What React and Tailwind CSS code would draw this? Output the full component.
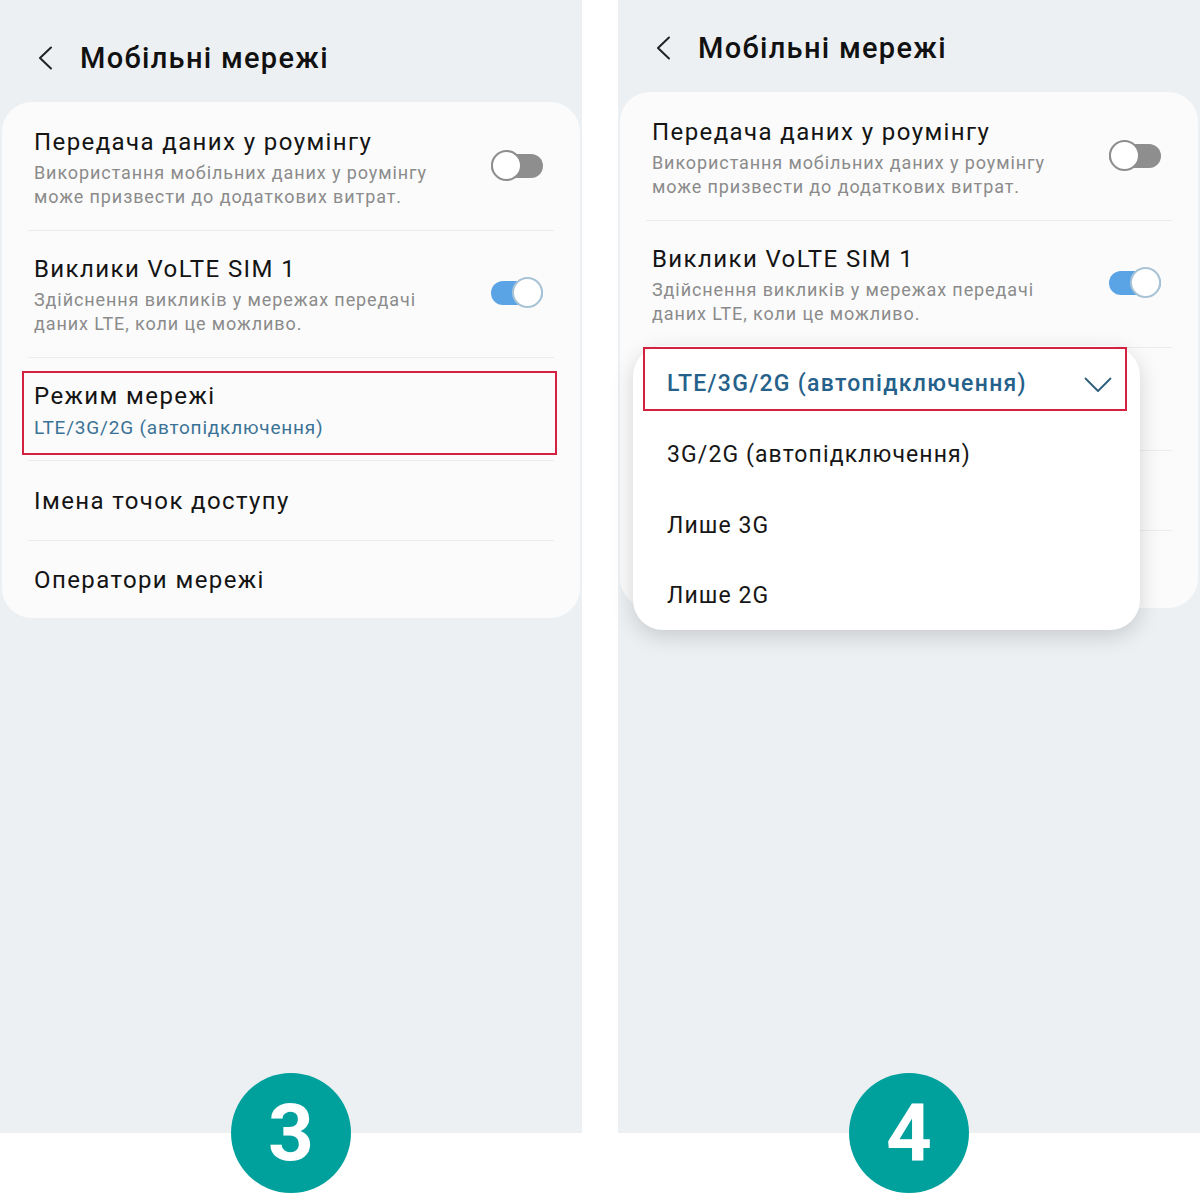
import React from 'react';

const font = { fontFamily: 'Roboto, "Noto Sans", sans-serif' };

const Toggle = ({ on }) => (
    <div className="relative w-[52px] h-[31px] shrink-0 mb-[6px]">
        <div className={`absolute left-0 right-0 top-[4px] h-[24px] rounded-full ${on ? 'bg-[#5aa4e6]' : 'bg-[#8e8e8e]'}`} />
        <div
            className={`absolute top-0 w-[31px] h-[31px] rounded-full bg-white border-2 ${on ? 'right-0 border-[#a9c3d6]' : 'left-0 border-[#8e8e8e]'}`}
        />
    </div>
);

const Divider = () => <div className="h-px bg-[#ececec]" />;

const Row = ({ title, sub, blue, toggle, hidden, className }) => (
    <div className={`flex items-center pl-[6px] pr-[11px] ${className}`}>
        <div className={`flex-1 min-w-0 ${hidden ? 'invisible' : ''}`}>
            <div className="text-[24px] leading-[30px] tracking-[1.4px] text-[#141414]">{title}</div>
            {sub && (
                <div
                    className={
                        blue
                            ? 'mt-[5px] text-[19px] leading-[24px] tracking-[0.8px] text-[#3b7396]'
                            : 'mt-[4px] text-[18px] leading-[24px] tracking-[0.9px] text-[#8b8b8b]'
                    }
                >
                    {sub}
                </div>
            )}
        </div>
        {toggle !== undefined && <Toggle on={toggle} />}
    </div>
);

const Header = ({ top }) => (
    <div className={`flex items-center pl-[37px] gap-[27px] ${top}`}>
        <svg width="16" height="24" viewBox="0 0 16 24" fill="none">
            <path d="M14 1.5 L3 12 L14 22.5" stroke="#222" strokeWidth="2" strokeLinecap="round" strokeLinejoin="round" />
        </svg>
        <div className="text-[29px] leading-[36px] font-medium tracking-[1.3px] text-[#111]">Мобільні мережі</div>
    </div>
);

const Settings = ({ showBox, covered }) => (
    <div className="relative mx-[2px] mt-[26px] rounded-[30px] bg-[#fbfbfb] px-[26px]">
        <Row
            className="pt-[25px] pb-[21px]"
            title="Передача даних у роумінгу"
            sub={<>Використання мобільних даних у роумінгу<br />може призвести до додаткових витрат.</>}
            toggle={false}
        />
        <Divider />
        <Row
            className="pt-[23px] pb-[21px]"
            title="Виклики VoLTE SIM 1"
            sub={<>Здійснення викликів у мережах передачі<br />даних LTE, коли це можливо.</>}
            toggle={true}
        />
        <Divider />
        <Row className="pt-[23px] pb-[20px]" title="Режим мережі" sub="LTE/3G/2G (автопідключення)" blue hidden={covered} />
        <Divider />
        <Row className="pt-[25px] pb-[24px]" title="Імена точок доступу" hidden={covered} />
        <Divider />
        <Row className="pt-[24px] pb-[23px]" title="Оператори мережі" hidden={covered} />
        {showBox && (
            <div className="absolute left-[20px] top-[269px] w-[535px] h-[84px] border-2 border-[#d3223f]" />
        )}
    </div>
);

const Badge = ({ n }) => (
    <div className="absolute left-1/2 -translate-x-1/2 -bottom-[60px] w-[120px] h-[120px] rounded-full bg-[#00a09c] flex items-center justify-center">
        <span className="text-white text-[80px] leading-none font-bold" style={{ fontFamily: 'Roboto, "Liberation Sans", sans-serif' }}>{n}</span>
    </div>
);

const Option = ({ label, selected, h = 'h-[71px]' }) => (
    <div className={`${h} flex items-center pl-[34px] pr-[28px]`}>
        <div className={`flex-1 text-[23px] ${selected ? 'font-medium tracking-[1.3px] text-[#25618a]' : 'tracking-[1.1px] text-[#161616]'}`}>{label}</div>
        {selected && (
            <svg width="28" height="18" viewBox="0 0 28 18" fill="none">
                <path d="M1.5 2.5 L14 15 L26.5 2.5" stroke="#2f5d7c" strokeWidth="1.8" strokeLinecap="round" strokeLinejoin="round" />
            </svg>
        )}
    </div>
);

export default function App() {
    return (
        <div className="w-[1200px] h-[1200px] bg-white flex gap-[36px]" style={font}>
            <div className="relative w-[582px] h-[1133px] bg-[#edf0f3]">
                <Header top="pt-[40px]" />
                <Settings showBox />
                <Badge n="3" />
            </div>
            <div className="relative w-[582px] h-[1133px] bg-[#edf0f3]">
                <Header top="pt-[30px]" />
                <Settings covered />
                <div className="absolute left-[15px] top-[346px] w-[507px] pt-[3px] rounded-[30px] bg-white shadow-[0_6px_22px_rgba(0,0,0,0.16)]">
                    <Option label="LTE/3G/2G (автопідключення)" selected />
                    <Option label="3G/2G (автопідключення)" />
                    <Option label="Лише 3G" />
                    <Option label="Лише 2G" h="h-[68px]" />
                </div>
                <div className="absolute left-[25px] top-[347px] w-[484px] h-[64px] border-2 border-[#d3223f]" />
                <Badge n="4" />
            </div>
        </div>
    );
}
